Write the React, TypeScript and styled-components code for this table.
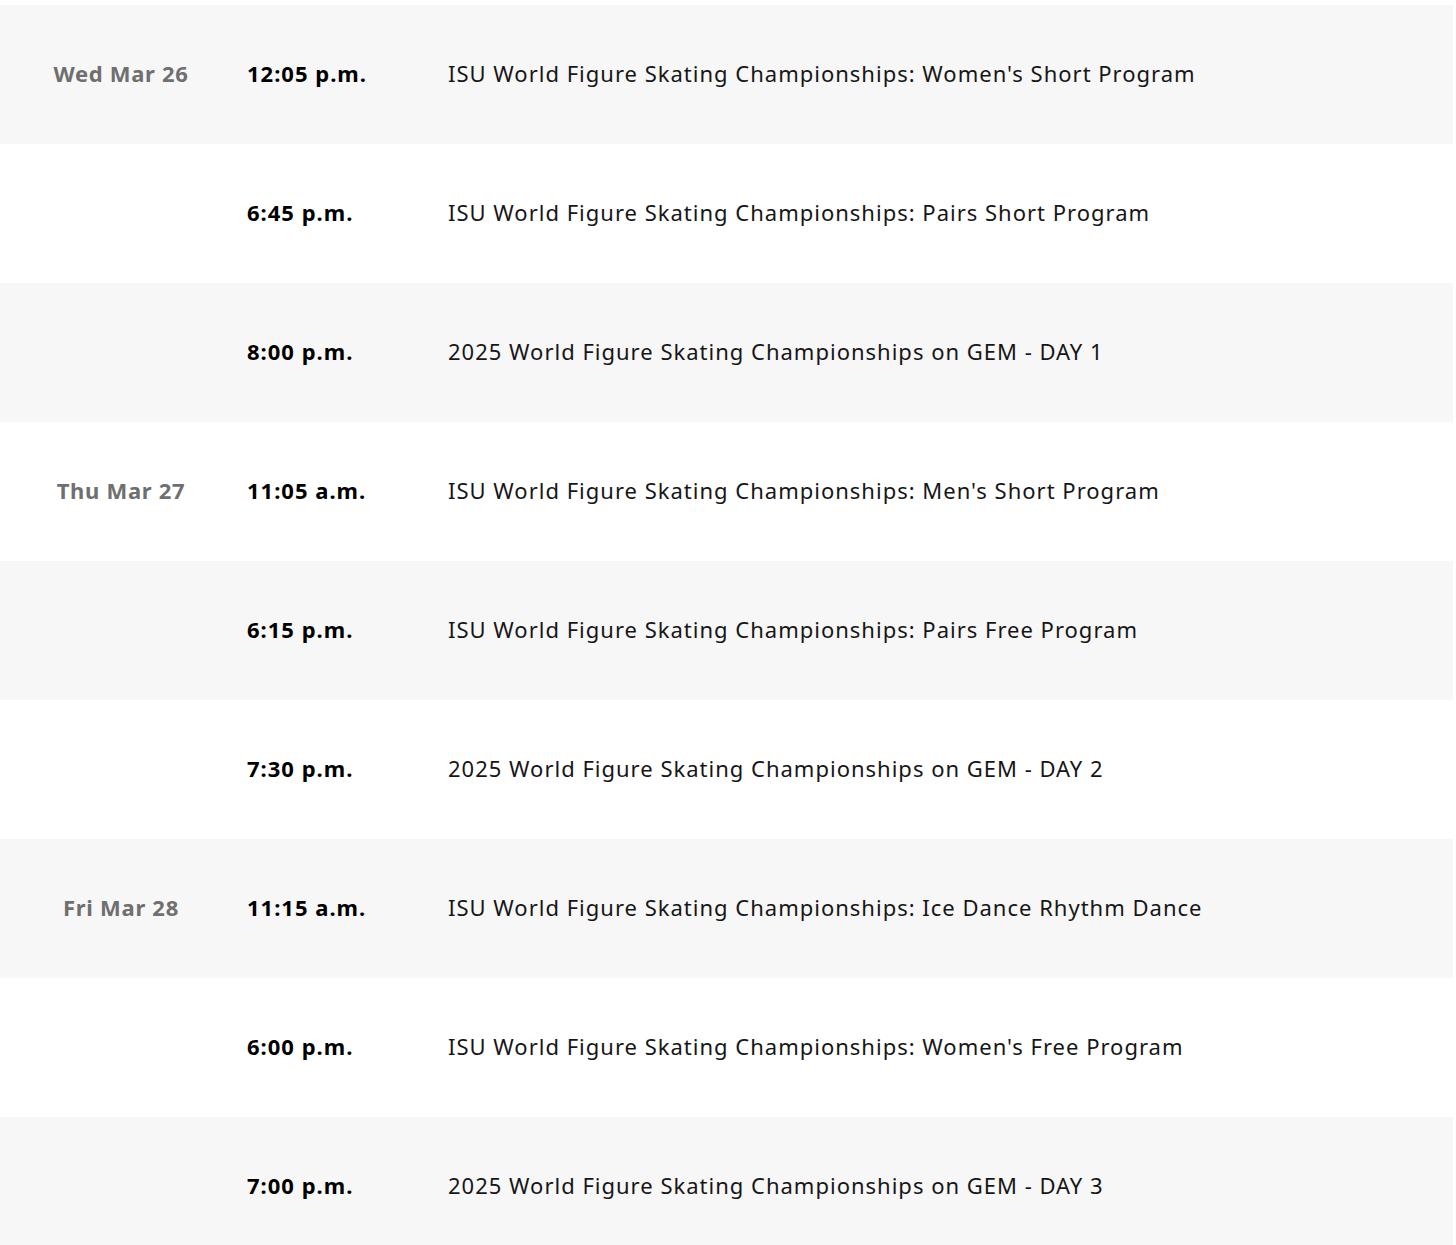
import styled, { createGlobalStyle } from "styled-components";

const GlobalStyle = createGlobalStyle`
    body {
        margin: 0;
        background: #ffffff;
        font-family: "Noto Sans", "Open Sans", sans-serif;
    }
`

const Schedule = styled.div`
    display: flex;
    flex-direction: column;
    width: 1453px;
    padding-top: 5px;
`

const Row = styled.div<{ $shaded: boolean }>`
    display: grid;
    grid-template-columns: 242px 201px 1fr;
    align-items: center;
    height: 139px;
    padding-bottom: 4px;
    box-sizing: border-box;
    background-color: ${(props) => (props.$shaded ? "#f7f7f7" : "#ffffff")};
`

const DateCell = styled.div`
    text-align: center;
    font-size: 22px;
    font-weight: 700;
    letter-spacing: 0.7px;
    color: #6f6f6f;
`

const TimeCell = styled.div`
    padding-left: 5px;
    font-size: 22px;
    font-weight: 700;
    letter-spacing: 1px;
    color: #000000;
`

const TitleCell = styled.div`
    padding-left: 5px;
    font-size: 22px;
    letter-spacing: 1px;
    color: #161616;
`

const events = [
    { date: "Wed Mar 26", time: "12:05 p.m.", title: "ISU World Figure Skating Championships: Women's Short Program" },
    { date: "", time: "6:45 p.m.", title: "ISU World Figure Skating Championships: Pairs Short Program" },
    { date: "", time: "8:00 p.m.", title: "2025 World Figure Skating Championships on GEM - DAY 1" },
    { date: "Thu Mar 27", time: "11:05 a.m.", title: "ISU World Figure Skating Championships: Men's Short Program" },
    { date: "", time: "6:15 p.m.", title: "ISU World Figure Skating Championships: Pairs Free Program" },
    { date: "", time: "7:30 p.m.", title: "2025 World Figure Skating Championships on GEM - DAY 2" },
    { date: "Fri Mar 28", time: "11:15 a.m.", title: "ISU World Figure Skating Championships: Ice Dance Rhythm Dance" },
    { date: "", time: "6:00 p.m.", title: "ISU World Figure Skating Championships: Women's Free Program" },
    { date: "", time: "7:00 p.m.", title: "2025 World Figure Skating Championships on GEM - DAY 3" },
];

export default function App() {
    return (
        <>
            <GlobalStyle />
            <Schedule>
                {events.map((ev, i) => (
                    <Row key={i} $shaded={i % 2 === 0}>
                        <DateCell>{ev.date}</DateCell>
                        <TimeCell>{ev.time}</TimeCell>
                        <TitleCell>{ev.title}</TitleCell>
                    </Row>
                ))}
            </Schedule>
        </>
    )
}
